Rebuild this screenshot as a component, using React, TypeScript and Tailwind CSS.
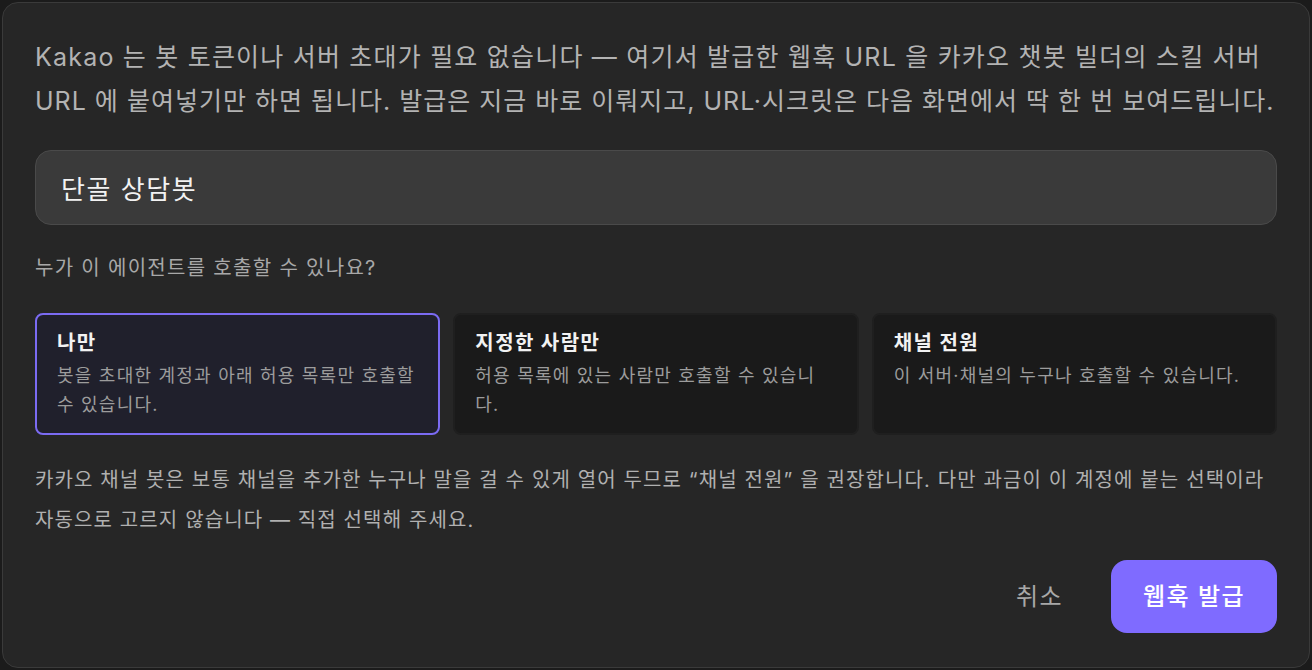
import { useState } from "react";

const options = [
  { id: "me", title: "나만", desc: "봇을 초대한 계정과 아래 허용 목록만 호출할 수 있습니다." },
  { id: "allow", title: "지정한 사람만", desc: "허용 목록에 있는 사람만 호출할 수 있습니다." },
  { id: "all", title: "채널 전원", desc: "이 서버·채널의 누구나 호출할 수 있습니다." },
];

export default function App() {
  const [scope, setScope] = useState("me");
  const [name, setName] = useState("단골 상담봇");

  return (
    <div
      className="min-h-[670px] bg-[#1b1b1b] p-[2px]"
      style={{ fontFamily: '"Inter", "Noto Sans CJK KR", sans-serif' }}
    >
      <div className="flex h-[666px] flex-col rounded-2xl border border-[#3a3a3a] bg-[#262626] px-[32px] pt-[32px]">
        <p className="text-[25px] leading-[44px] tracking-[0.048em] text-[#b3b3b3]">
          Kakao 는 봇 토큰이나 서버 초대가 필요 없습니다 — 여기서 발급한 웹훅 URL 을 카카오 챗봇 빌더의 스킬 서버
          <br />
          <span className="whitespace-nowrap tracking-[0.04em]">
            URL 에 붙여넣기만 하면 됩니다. 발급은 지금 바로 이뤄지고, URL·시크릿은 다음 화면에서 딱 한 번 보여드립니다.
          </span>
        </p>

        <input
          value={name}
          onChange={(e) => setName(e.target.value)}
          className="mt-[27px] h-[75px] w-full rounded-2xl border border-[#4a4a4a] bg-[#3a3a3a] px-[25px] text-[26px] tracking-[0.06em] text-[#f2f2f2] outline-none"
        />

        <div className="mt-[28px] text-[20px] leading-[30px] tracking-[0.065em] text-[#a8a8a8]">
          누가 이 에이전트를 호출할 수 있나요?
        </div>

        <div className="mt-[30px] grid grid-cols-3 gap-[13px]">
          {options.map((o) => {
            const active = scope === o.id;
            return (
              <button
                key={o.id}
                onClick={() => setScope(o.id)}
                className={
                  active
                    ? "flex h-[122px] flex-col items-start justify-start rounded-lg border-2 border-[#7b6bf2] bg-[#20202c] px-[20px] pt-[14px] text-left"
                    : "flex h-[122px] flex-col items-start justify-start rounded-lg border-2 border-[#1f1f1f] bg-[#1a1a1a] px-[20px] pt-[14px] text-left"
                }
              >
                <div className="text-[20px] font-bold leading-[28px] tracking-[0.07em] text-[#f2f2f2]">{o.title}</div>
                <div className="mt-[4px] text-[18px] leading-[29px] tracking-[0.068em] text-[#9c9c9c]">{o.desc}</div>
              </button>
            );
          })}
        </div>

        <p className="mt-[25px] text-[20px] leading-[40px] tracking-[0.056em] text-[#b0b0b0]">
          카카오 채널 봇은 보통 채널을 추가한 누구나 말을 걸 수 있게 열어 두므로 “채널 전원” 을 권장합니다. 다만 과금이 이
          계정에 붙는 선택이라
          <br />
          자동으로 고르지 않습니다 — 직접 선택해 주세요.
        </p>

        <div className="mt-[20px] flex items-center justify-end gap-[32px]">
          <button className="px-[16px] text-[24px] tracking-[0.06em] text-[#a8a8a8]">취소</button>
          <button className="h-[73px] rounded-2xl bg-[#7f6bff] px-[32px] text-[24px] font-medium tracking-[0.06em] text-white">
            웹훅 발급
          </button>
        </div>
      </div>
    </div>
  );
}
